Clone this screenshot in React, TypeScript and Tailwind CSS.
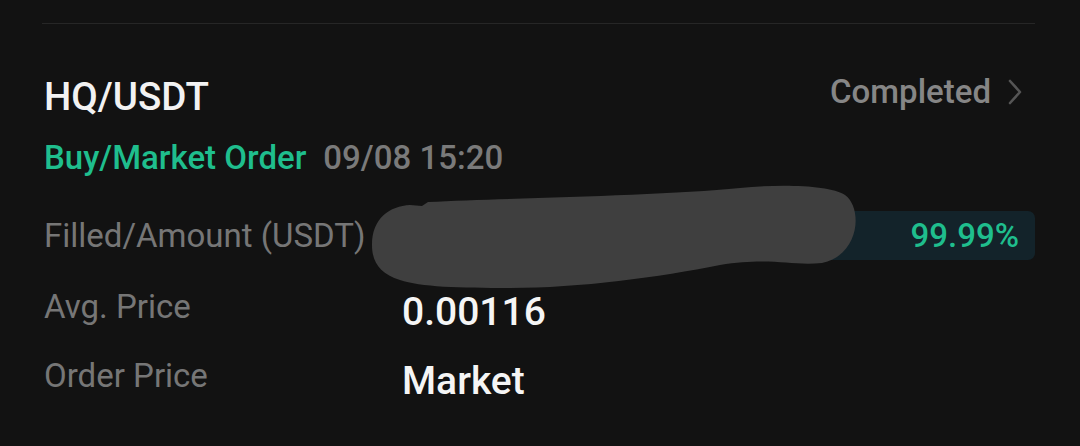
import React from "react";

const font = { fontFamily: "Roboto, 'Noto Sans', sans-serif" };

export default function App() {
  return (
    <div
      className="relative w-[1080px] h-[446px] bg-[#121212] overflow-hidden pl-[42px] pr-[45px] pt-[23px]"
      style={font}
    >
      <div className="h-px bg-[#262626]" />

      <div className="pl-[2px]">
        {/* header */}
        <div className="mt-[54px] flex items-start justify-between">
          <div className="text-[38.5px] leading-[38px] font-medium text-[#f2f2f2]">HQ/USDT</div>
          <div className="-mt-[3px] flex items-center">
            <span className="text-[33px] leading-[33px] font-medium text-[#868686]">Completed</span>
            <svg className="ml-[17px] mr-[13px]" width="14" height="26" viewBox="0 0 14 26" fill="none">
              <path d="M2 2 L12 13 L2 24" stroke="#555555" strokeWidth="2.6" strokeLinecap="round" strokeLinejoin="round" />
            </svg>
          </div>
        </div>

        <div className="mt-[25px] flex items-start text-[33px] leading-[33px] font-medium">
          <span className="text-[#1fbe8d]">Buy/Market Order</span>
          <span className="ml-[17px] text-[#7a7a7a]">09/08 15:20</span>
        </div>

        {/* Filled row */}
        <div className="mt-[37px] flex items-center h-[49px]">
          <div className="w-[358px] text-[33px] leading-[33px] text-[#767676]">Filled/Amount (USDT)</div>
          <div className="flex-1 h-[49px] rounded-[7px] bg-[#13232a] flex items-center justify-end pr-[16px]">
            <span className="text-[33px] leading-[33px] font-medium text-[#1fbe8d]">99.99%</span>
          </div>
        </div>

        {/* Avg price */}
        <div className="mt-[30px] flex items-start">
          <div className="w-[358px] text-[33px] leading-[33px] text-[#767676]">Avg. Price</div>
          <div className="mt-[3px] text-[39px] leading-[39px] font-medium text-[#f5f5f5]">0.00116</div>
        </div>

        {/* Order price */}
        <div className="mt-[27px] flex items-start">
          <div className="w-[358px] text-[33px] leading-[33px] text-[#767676]">Order Price</div>
          <div className="mt-[3px] text-[39px] leading-[39px] font-medium text-[#f5f5f5]">Market</div>
        </div>
      </div>

      {/* redaction scribble */}
      <svg
        className="absolute left-[360px] top-[180px]"
        width="520"
        height="120"
        viewBox="0 0 520 120"
      >
        <path
          d="M 12 65 C 12 38, 30 26, 50 25 L 62 26 L 68 22 C 150 18, 300 16, 380 8 C 420 4, 470 5, 485 15 C 503 28, 500 75, 462 83 C 430 86, 410 77, 360 85 C 300 97, 220 108, 150 108 C 100 108, 60 107, 40 100 C 20 94, 12 82, 12 65 Z"
          fill="#3f3f3f"
        />
      </svg>
    </div>
  );
}
